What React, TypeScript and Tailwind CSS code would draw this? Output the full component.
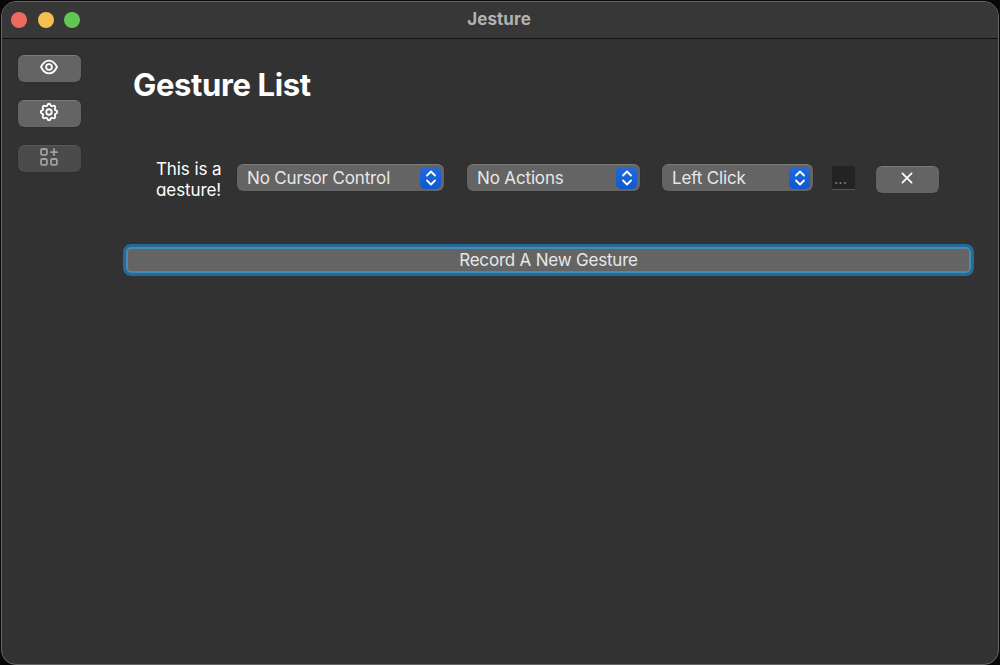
import React from "react";
import { TbSettings } from "react-icons/tb";

function Select({ label, className }: { label: string; className: string }) {
  return (
    <button
      className={`flex h-[27px] items-center justify-between rounded-[6px] border-t border-[#7c7c7c] bg-[#646464] pr-[3px] pl-[10px] text-left text-[17px] tracking-[-0.15px] text-[#e8e8e8] shadow-[0_0_1px_#161616] ${className}`}
    >
      <span className="pt-[2px] whitespace-nowrap">{label}</span>
      <span className="flex h-[22px] w-[21px] items-center justify-center rounded-[5px] bg-linear-to-b from-[#2368db] to-[#0c59d1]">
        <svg width="12" height="16" viewBox="0 0 12 16" fill="none" stroke="#fff" strokeWidth="1.8" strokeLinecap="round" strokeLinejoin="round">
          <path d="M2 5.5 6 1.5l4 4M2 10.5l4 4 4-4" />
        </svg>
      </span>
    </button>
  );
}

function Icon({ children }: { children: React.ReactNode }) {
  return (
    <svg width="18" height="18" viewBox="0 0 18 18" fill="none" stroke="currentColor" strokeWidth="1.8" strokeLinecap="round" strokeLinejoin="round">
      {children}
    </svg>
  );
}

function IconButton({ children, disabled = false }: { children: React.ReactNode; disabled?: boolean }) {
  return (
    <button
      disabled={disabled}
      className={`flex h-[27px] w-[63px] shrink-0 items-center justify-center rounded-[6px] border-t pr-px pb-[4px] shadow-[0_0_1px_#161616] ${
        disabled ? "border-[#595959] bg-[#4b4b4b] text-[#a0a0a0]" : "border-[#7c7c7c] bg-[#646464] text-white"
      }`}
    >
      {children}
    </button>
  );
}

export default function App() {
  return (
    <div className="h-[665px] w-[1000px] overflow-hidden bg-[#080808] px-px pt-px font-['Inter','Liberation_Sans',sans-serif]">
      <div className="flex h-[664px] w-[998px] flex-col overflow-hidden rounded-[15px] border border-[#666] bg-[#323232]">
        <header className="grid h-[37px] shrink-0 grid-cols-3 items-center border-b border-[#111] bg-[#373737] pb-px">
          <div className="flex gap-[10.5px] pl-[9px]">
            <span className="h-4 w-4 rounded-full bg-[#ed6a5f]" />
            <span className="h-4 w-4 rounded-full bg-[#f5bf50]" />
            <span className="h-4 w-4 rounded-full bg-[#62c655]" />
          </div>
          <h1 className="pt-px pr-[2px] text-center text-[17px] font-bold tracking-[0.1px] text-[#b2b2b2]">Jesture</h1>
        </header>
        <div className="flex flex-1">
          <aside className="flex w-[121px] flex-col gap-[18px] pt-4 pl-4">
            <IconButton>
              <Icon>
                <path d="M1 9C3 5 5.8 2.6 9 2.6S15 5 17 9c-2 4-4.8 6.4-8 6.4S3 13 1 9Z" />
                <circle cx="9" cy="9" r="2.9" />
              </Icon>
            </IconButton>
            <IconButton>
              <TbSettings size={22} />
            </IconButton>
            <IconButton disabled>
              <Icon>
                <rect x="1" y="1" width="5.9" height="5.9" rx="1.4" />
                <rect x="1" y="11" width="5.9" height="5.9" rx="1.4" />
                <rect x="11" y="11" width="5.9" height="5.9" rx="1.4" />
                <path d="M14 1v6.2M10.9 4.1h6.2" />
              </Icon>
            </IconButton>
          </aside>
          <main className="w-[851px] pt-[25px]">
            <h2 className="pl-[10px] text-[31px] leading-[41px] font-bold tracking-[-0.35px] text-white">Gesture List</h2>
            <div className="mt-[53px] flex h-[40px] items-start pl-[33px]">
              <div className="mr-[11px] h-[38px] w-[70px] overflow-hidden pt-px text-[17px] leading-[21px] tracking-[-0.1px] text-white">
                This is a gesture!
              </div>
              <Select label="No Cursor Control" className="mt-[6px] mr-[23px] w-[207px]" />
              <Select label="No Actions" className="mt-[6px] mr-[22px] w-[173px]" />
              <Select label="Left Click" className="mt-[6px] mr-[19px] w-[151px]" />
              <div className="mt-[8px] mr-[21px] h-[24px] w-[23px] border-b border-[#555] bg-[#232323] pl-[2px] text-[15px] leading-[26px] text-[#777]">...</div>
              <div className="mt-[8px]">
                <IconButton>
                  <Icon>
                    <path d="m4.4 4.4 9.2 9.2M13.6 4.4l-9.2 9.2" />
                  </Icon>
                </IconButton>
              </div>
            </div>
            <button className="mt-[46px] flex h-[32px] w-[851px] items-center justify-center rounded-[8px] border-[3px] border-[#236b99] bg-[#646464] pt-px text-[17px] tracking-[-0.2px] text-[#e8e8e8] shadow-[inset_0_0_0_2px_#468ab5]">
              Record A New Gesture
            </button>
          </main>
        </div>
      </div>
    </div>
  );
}
